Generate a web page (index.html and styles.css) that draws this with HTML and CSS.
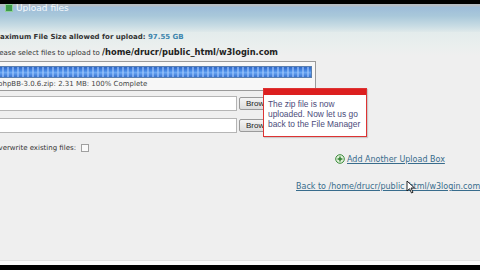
FILE: index.html
```html
<!DOCTYPE html>
<html>
<head>
<meta charset="utf-8">
<link rel="stylesheet" href="styles.css">
</head>
<body>
<div class="topbar"></div>
<div class="header">
  <div class="title"><span class="ticon"></span>Upload files</div>
</div>
<div class="content">
  <div class="maxline">Maximum File Size allowed for upload: <span class="size">97.55 GB</span></div>
  <div class="selline">Please select files to upload to <b class="path">/home/drucr/public_html/w3login.com</b></div>
  <div class="progress">
    <div class="bar"></div>
    <div class="ptext">phpBB-3.0.6.zip: 2.31 MB: 100% Complete</div>
  </div>
  <div class="filerow"><div class="field"></div><div class="browse">Browse...</div></div>
  <div class="filerow"><div class="field"></div><div class="browse">Browse...</div></div>
  <div class="overwrite">Overwrite existing files: <span class="check"></span></div>
  <div class="addrow"><svg class="plus" width="10" height="10" viewBox="0 0 10 10"><circle cx="5" cy="5" r="4.3" fill="#dff0d8" stroke="#3a8a3a" stroke-width="1"/><path d="M5 2.6V7.4M2.6 5H7.4" stroke="#2e7d2e" stroke-width="1.4"/></svg><span class="link">Add Another Upload Box</span></div>
  <div class="backrow"><span class="link">Back to /home/drucr/public_html/w3login.com</span></div>
</div>
<div class="tooltip">
  <div class="tbar"></div>
  <div class="ttext">The zip file is now uploaded. Now let us go back to the File Manager</div>
</div>
<svg class="cursor" width="10" height="14" viewBox="0 0 10 14"><path d="M1 1V11L3.5 8.7L5.5 13L7 12.3L5 8H8.5Z" fill="#fff" stroke="#111" stroke-width="0.9" stroke-linejoin="round"/></svg>
<div class="bottom">
  <div class="bline"></div>
  <div class="bwhite"></div>
  <div class="bblack"></div>
</div>
</body>
</html>
```
FILE: styles.css
```css
html, body {
  margin: 0;
  padding: 0;
}
body {
  width: 480px;
  height: 270px;
  overflow: hidden;
  position: relative;
  background: #efefef;
  font-family: "DejaVu Sans", Verdana, sans-serif;
  color: #333;
}
.topbar {
  height: 5px;
  background: #000;
}
.header {
  height: 28px;
  background: linear-gradient(to bottom, #b4bcc4 0px, #b4bcc4 2px, #9dbcd9 3px, #a9c8da 12px, #c8dce4 22px, #dfe9ea 28px);
}
.title {
  display: flex;
  align-items: center;
  gap: 3px;
  height: 8px;
  margin-top: -1px;
  padding-left: 5px;
  font-size: 9px;
  line-height: 8px;
  color: #f4f8fa;
  overflow: hidden;
}
.ticon {
  width: 6px;
  height: 6px;
  background: #3d9a4a;
  border: 1px solid #8fd09a;
}
.content {
  margin-left: -7px;
  background: linear-gradient(to bottom, #e3ecec 0px, #eaefee 14px, #efefef 24px);
}
.maxline {
  height: 10px;
  line-height: 10px;
  font-size: 7px;
  font-weight: bold;
  white-space: nowrap;
}
.size {
  color: #3f86ad;
}
.selline {
  margin-top: 5px;
  height: 10px;
  line-height: 10px;
  font-size: 7px;
  white-space: nowrap;
}
.path {
  font-size: 8.3px;
  color: #222;
}
.progress {
  margin-top: 4px;
  width: 323px;
  height: 30px;
  box-sizing: border-box;
  border: 1px solid #9a9a9a;
  background: #f7f7f7;
  padding: 4px 3px 0 4px;
}
.bar {
  height: 12px;
  box-sizing: border-box;
  border: 1px solid #5a7fae;
  background:
    repeating-linear-gradient(to right, rgba(255,255,255,0) 0px, rgba(255,255,255,0) 3px, rgba(170,205,255,0.55) 3px, rgba(170,205,255,0.55) 5px),
    linear-gradient(to bottom, #2e66c8 0%, #4b8ce6 40%, #6aa6f2 55%, #3672d2 100%);
}
.ptext {
  margin-top: 2px;
  font-size: 7px;
  line-height: 9px;
  white-space: nowrap;
  color: #444;
}
.filerow {
  display: flex;
  gap: 2px;
  height: 15px;
  margin-top: 5px;
}
.filerow + .filerow {
  margin-top: 7px;
}
.field {
  width: 244px;
  box-sizing: border-box;
  border: 1px solid #b5b5b5;
  background: #fff;
}
.browse {
  width: 52px;
  height: 13px;
  margin-top: 1px;
  box-sizing: border-box;
  border: 1px solid #9a9a9a;
  border-radius: 2px;
  background: linear-gradient(to bottom, #f4f4f4, #dcdcdc);
  font-family: "Liberation Sans", Arial, sans-serif;
  font-size: 8px;
  line-height: 11px;
  padding-left: 6px;
  color: #222;
}
.overwrite {
  display: flex;
  align-items: center;
  gap: 5px;
  margin-top: 10px;
  height: 10px;
  font-size: 7px;
  white-space: nowrap;
}
.check {
  width: 8px;
  height: 8px;
  box-sizing: border-box;
  border: 1px solid #a0a0a0;
  background: #fafafa;
}
.addrow {
  display: flex;
  align-items: center;
  gap: 2px;
  margin-left: 342px;
  margin-top: 0px;
  height: 12px;
  font-size: 8px;
  white-space: nowrap;
}
.link {
  color: #386c8c;
  text-decoration: underline;
}
.backrow {
  margin-left: 303px;
  margin-top: 16px;
  height: 12px;
  line-height: 12px;
  font-size: 8px;
  white-space: nowrap;
}
.tooltip {
  position: absolute;
  left: 263px;
  top: 88px;
  width: 104px;
  height: 49px;
  box-sizing: border-box;
  border: 1px solid #d33;
  background: #fff;
  box-shadow: 1px 1px 1px rgba(0,0,0,0.15);
}
.tbar {
  height: 6px;
  background: #dc1f1f;
}
.ttext {
  padding: 4px 0 0 4px;
  font-family: "Liberation Sans", Arial, sans-serif;
  font-size: 8.4px;
  line-height: 10px;
  color: #4b4b7a;
}
.cursor {
  position: absolute;
  left: 406px;
  top: 180px;
}
.bottom {
  position: absolute;
  left: 0;
  right: 0;
  bottom: 0;
}
.bline {
  height: 1px;
  background: #e2e2e2;
}
.bwhite {
  height: 4px;
  background: #fafafa;
}
.bblack {
  height: 5px;
  background: #000;
}
```
